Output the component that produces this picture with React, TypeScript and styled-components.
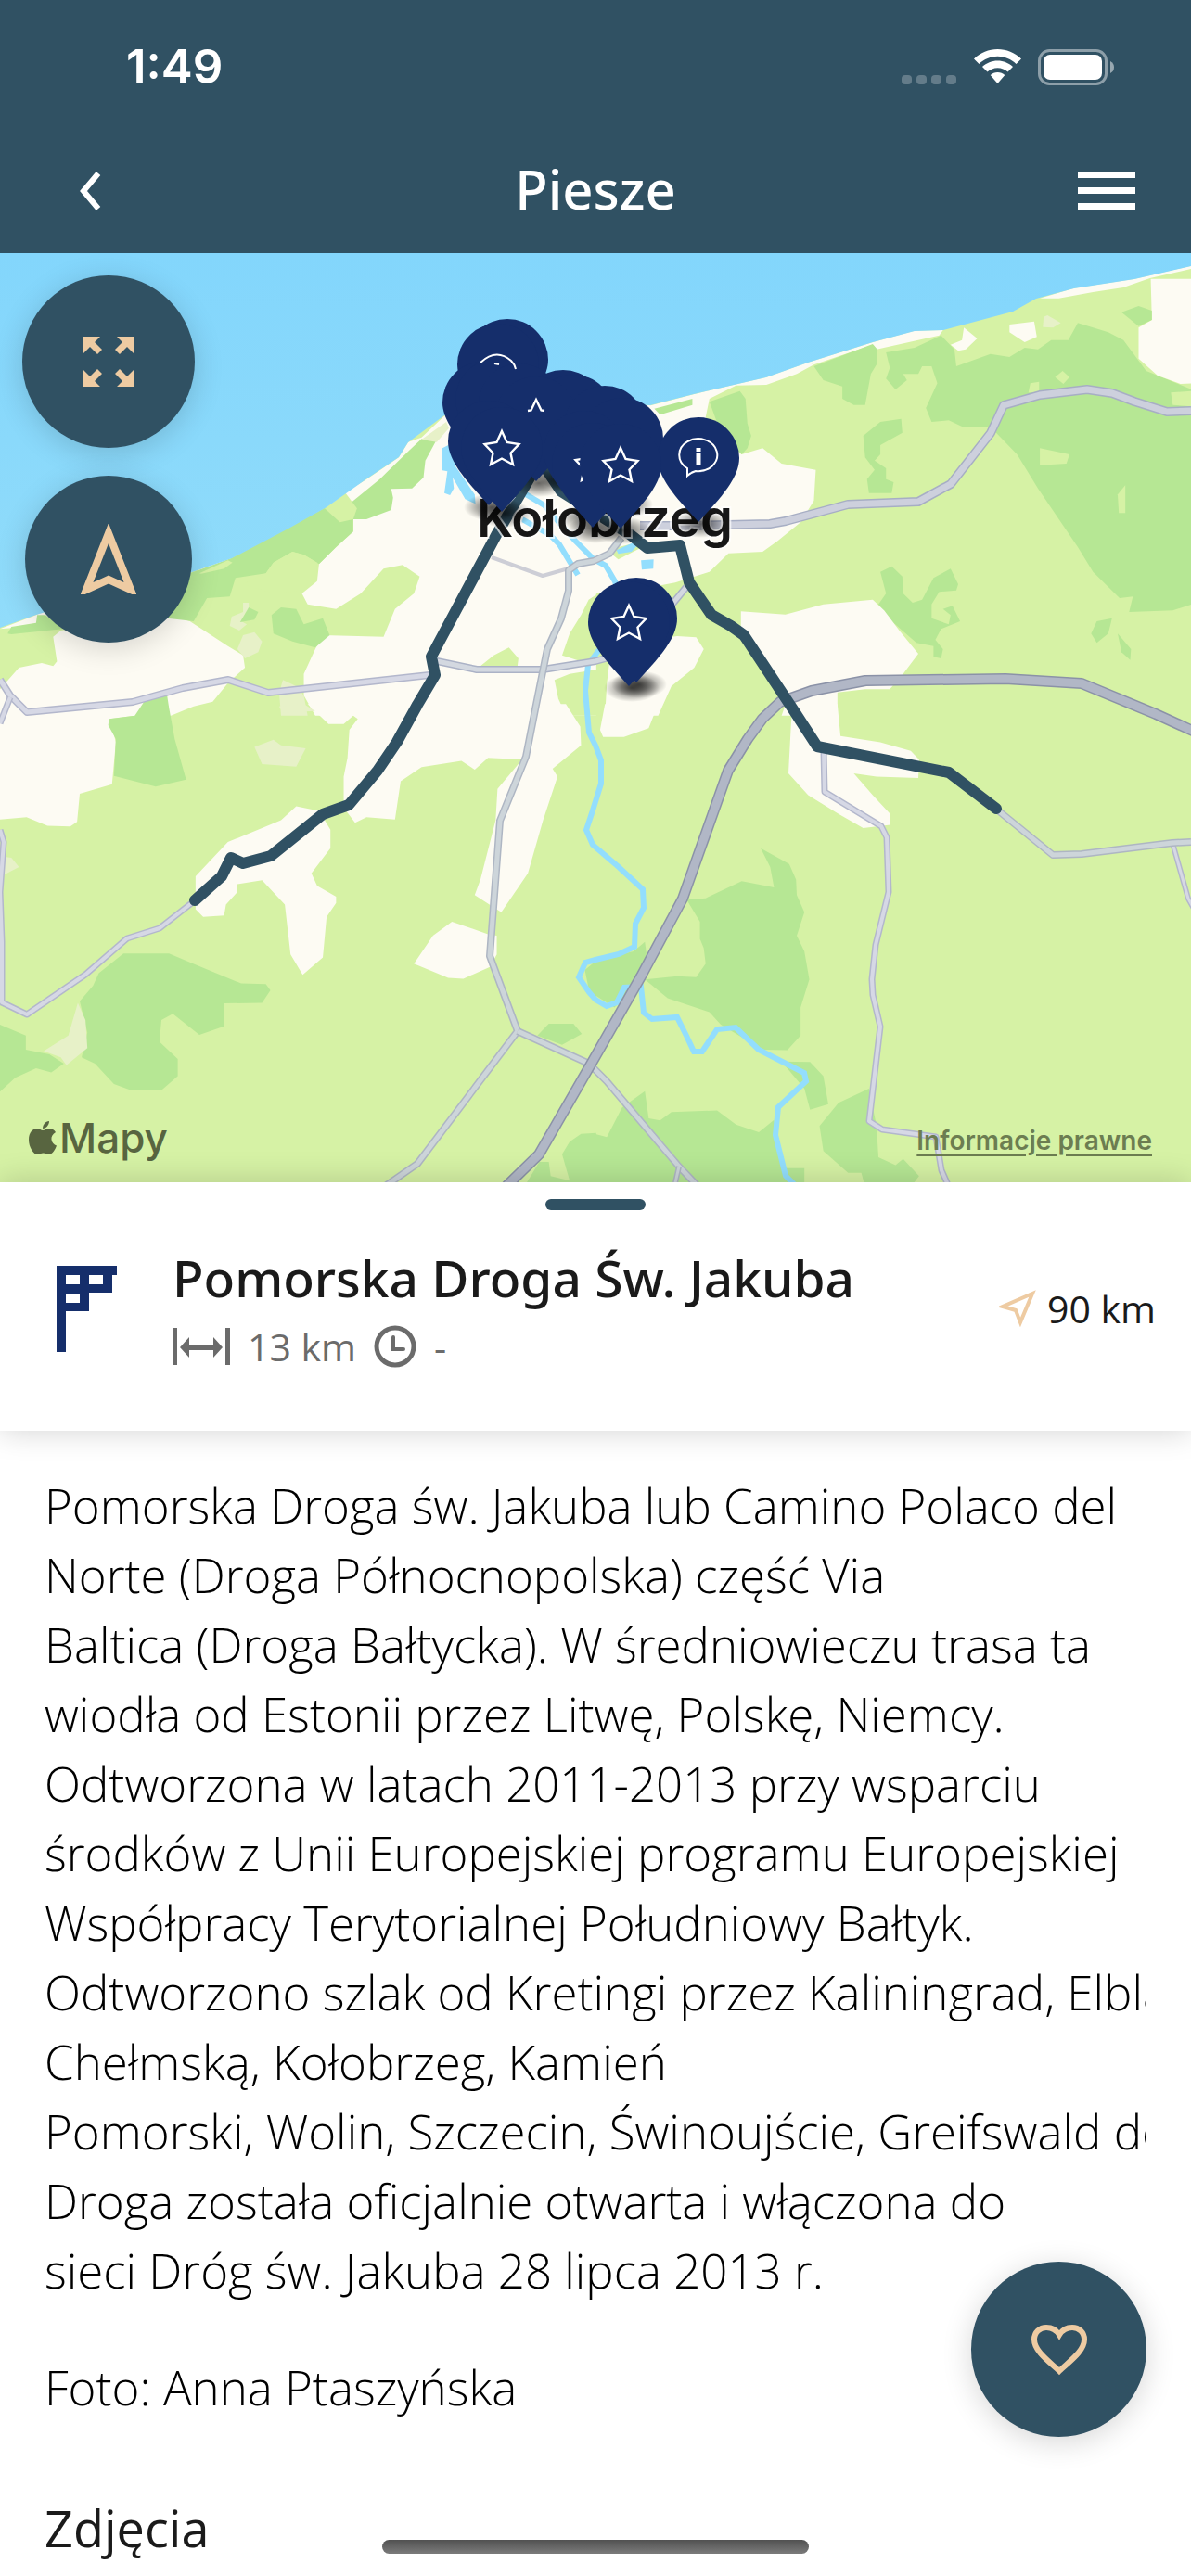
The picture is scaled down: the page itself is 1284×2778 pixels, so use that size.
import React from "react";
import styled, { createGlobalStyle } from "styled-components";

const TEAL = "#305163";
const SAND = "#eecba2";
const NAVY = "#152e6b";
const INK = "#1a1a1a";

const GlobalStyle = createGlobalStyle`
  *, *::before, *::after { box-sizing: border-box; }
  body {
    margin: 0;
    background: #fff;
    color: ${INK};
    font-family: "Open Sans", "Noto Sans", sans-serif;
  }
  button { border: 0; padding: 0; background: none; cursor: pointer; }
`;

const Screen = styled.div`
  display: flex;
  flex-direction: column;
  min-height: 100vh;
  overflow: hidden;
`;

const StatusBar = styled.div`
  display: flex;
  align-items: center;
  justify-content: space-between;
  height: 144px;
  padding: 0 82px 0 136px;
  background: ${TEAL};
  color: #fff;
`;

const Clock = styled.time`
  font: 600 51px/60px Inter, sans-serif;
`;

const StatusIcons = styled.div`
  display: flex;
  align-items: center;
  gap: 18px;
`;

const NavBar = styled.header`
  display: grid;
  grid-template-columns: 1fr auto 1fr;
  align-items: center;
  height: 129px;
  padding: 0 60px 6px;
  background: ${TEAL};
  color: #fff;
`;

const NavTitle = styled.h1`
  margin: 0;
  padding-bottom: 4px;
  font-family: "Noto Sans", "Open Sans", sans-serif;
  font-size: 58px;
  line-height: 80px;
  font-weight: 500;
`;

const NavButton = styled.button<{ $side: "start" | "end" }>`
  display: flex;
  justify-self: ${(p) => p.$side};
  padding-left: ${(p) => (p.$side === "start" ? 26 : 0)}px;
  color: #fff;
`;

const MapArea = styled.section`
  position: relative;
  overflow: hidden;
`;

const MapDrawing = styled.svg`
  display: block;
  width: 100%;
  height: auto;
`;

const MapControls = styled.div`
  position: absolute;
  top: 24px;
  left: 24px;
  display: flex;
  flex-direction: column;
  align-items: center;
  gap: 30px;
`;

const RoundButton = styled.button<{ $size: number }>`
  display: flex;
  align-items: center;
  justify-content: center;
  width: ${(p) => p.$size}px;
  height: ${(p) => p.$size}px;
  border-radius: 50%;
  background: ${TEAL};
  color: ${SAND};
  box-shadow: 0 6px 32px rgba(0, 0, 0, 0.16);
`;

const MapFooter = styled.footer`
  position: absolute;
  right: 42px;
  bottom: 20px;
  left: 31px;
  display: flex;
  align-items: center;
  justify-content: space-between;
`;

const MapBrand = styled.span`
  display: flex;
  align-items: center;
  gap: 3px;
  color: #586540;
  font: 500 44px/56px Inter, sans-serif;
`;

const LegalLink = styled.a`
  padding-top: 6px;
  color: #6c7d51;
  font: 600 28px/34px Inter, sans-serif;
  text-decoration-thickness: 3px;
  text-underline-offset: 4px;
`;

const RouteCard = styled.section`
  position: relative;
  display: flex;
  flex-direction: column;
  height: 268px;
  background: #fff;
  box-shadow: 0 0 32px rgba(0, 0, 0, 0.18);
`;

const Handle = styled.button`
  align-self: center;
  width: 108px;
  height: 12px;
  margin-top: 18px;
  border-radius: 6px;
  background: ${TEAL};
`;

const RouteRow = styled.div`
  display: grid;
  grid-template-columns: 66px 1fr auto;
  align-items: center;
  padding: 35px 38px 0 60px;
`;

const RouteInfo = styled.div`
  display: flex;
  flex-direction: column;
  gap: 6px;
  padding-left: 60px;
`;

const RouteName = styled.h2`
  margin: 0;
  font-family: "Noto Sans", "Open Sans", sans-serif;
  font-size: 55px;
  line-height: 76px;
  font-weight: 500;
`;

const Meta = styled.div`
  display: flex;
  align-items: center;
  gap: 19px;
  color: #6b6b6b;
  font-size: 41px;
  line-height: 60px;
`;

const Distance = styled.div`
  display: flex;
  align-items: center;
  gap: 12px;
  font-size: 41px;
  line-height: 60px;
`;

const Article = styled.main`
  padding: 43px 48px 0;
`;

const Paragraph = styled.p`
  margin: 0 0 51px;
  overflow: hidden;
  color: #000;
  font-size: 51px;
  line-height: 75px;
  font-weight: 300;
  white-space: pre;
`;

const SectionTitle = styled.h2`
  margin: 76px 0 0;
  font-size: 54px;
  line-height: 76px;
  font-weight: 400;
`;

const Favourite = styled(RoundButton)`
  position: fixed;
  right: 48px;
  bottom: 150px;
`;

const HomeIndicator = styled.div`
  position: fixed;
  bottom: 24px;
  left: 50%;
  width: 460px;
  height: 15px;
  border-radius: 8px;
  transform: translateX(-50%);
  background: linear-gradient(#515151, #7b7b7b);
`;

const CREAM = "#fdfbf3";
const GRASS = "#d6f2a5";
const WOOD = "#b6e794";
const PALE = "#e7f1c8";
const WATER = "#93defd";

type Area = [fill: string, points: string];

/* Land cover, one sheet for each quarter of the map. */
const sheets: { transform: string; areas: Area[] }[] = [
  {
    transform: "translate(0 270) scale(.40944 .33333)",
    areas: [
      [CREAM, "870,812 960,745 1050,670 1075,620 1110,605 1175,530 1300,470 1570,480 1570,1505 830,1505 800,1440 800,1370 830,1290 850,1245 1010,1250 1040,1160 1090,1110 1105,1055 1060,1018 1010,1030 950,1110 885,1160 810,1145 795,1110 835,1070 840,1015 885,960 930,910 930,870 900,850"],
      [CREAM, "140,1250 160,1230 460,1185 500,1200 600,1280 640,1310 645,1350 600,1400 560,1460 510,1475 450,1505 0,1505 0,1420 50,1350 110,1335 140,1345 150,1330"],
      [CREAM, "0,1225 95,1180 120,1165 135,1200 30,1222"],
      [CREAM, "520,1035 585,1000 615,995 600,1010 525,1045"],
      [WOOD, "20,1240 30,1218 95,1205 98,1180 120,1180 165,1225 30,1242"],
      [WOOD, "440,1190 500,1045 610,995 860,830 910,830 1000,740 1075,650 1110,610 1150,612 1120,680 1115,735 1085,770 1030,772 1035,800 1030,840 965,870 930,870 930,910 885,960 840,1015 800,985 770,975 720,1010 700,1045 620,1060 605,1120 545,1125 510,1200"],
      [GRASS, "700,1045 720,1010 770,975 800,985 835,1010 835,1060 795,1100 720,1110 640,1080"],
      [PALE, "1175,555 1110,612 1150,620 1182,575"],
      [GRASS, "855,835 910,785 940,835 930,870 895,880"],
      [GRASS, "525,1045 600,1003 612,1010 590,1030 530,1046"],
      [WOOD, "715,1180 740,1155 780,1160 800,1210 850,1190 868,1245 830,1285 770,1265 720,1240"],
      [PALE, "605,1215 610,1185 640,1170 640,1140 655,1140 655,1160 635,1200 650,1210 630,1230"],
      [WOOD, "632,1203 655,1155 680,1170 670,1195"],
      [PALE, "625,1290 640,1245 670,1235 690,1265 680,1300 645,1320"],
      [PALE, "735,1430 745,1390 780,1410 800,1440 810,1505 740,1505"],
      [GRASS, "1265,1345 1300,1310 1340,1285 1365,1320 1362,1350 1365,1367 1255,1367"],
      [GRASS, "1600,1090 1550,1130 1530,1180 1500,1240 1480,1310 1530,1330 1600,1330"],
      [GRASS, "1460,1390 1500,1370 1600,1350 1600,1505 1490,1505 1470,1450"],
      [WATER, "1165,640 1180,630 1200,700 1250,790 1252,820 1225,805 1192,735 1195,770 1185,792 1170,785 1178,715 1165,712"],
    ],
  },
  {
    transform: "translate(642 270) scale(.40944 .33333)",
    areas: [
      [CREAM, "-2,480 145,502 260,465 450,410 560,362 575,370 530,400 450,435 370,437 300,480 290,540 340,620 385,660 440,640 490,690 580,710 575,810 540,880 480,940 440,975 350,980 300,1040 210,1075 100,1100 -2,1110"],
      [WOOD, "155,512 255,480 255,500 170,532"],
      [WOOD, "300,490 380,455 395,480 400,560 410,600 400,640 385,660 330,590"],
      [CREAM, "560,362 730,297 840,260 915,258 905,275 740,320 730,305 575,370"],
      [CREAM, "1170,155 1260,122 1420,92 1568,50 1568,60 1460,90 1390,120 1310,135 1220,155"],
      [WOOD, "575,375 730,303 742,320 742,365 725,400 710,500 680,500 650,480 650,440 600,420"],
      [WOOD, "765,330 840,315 910,275 945,320 950,375 1040,335 1090,345 1130,315 1165,320 1200,290 1245,290 1270,235 1350,265 1390,290 1450,390 1540,435 1570,450 1570,1145 1520,1165 1405,1170 1415,1120 1380,1125 1310,1040 1270,960 1165,770 1110,660 1055,590 1030,570 965,570 930,550 885,555 870,510 900,430 885,375 860,375 850,400 810,400 820,420 790,450 765,415 775,380"],
      [CREAM, "1462,92 1570,92 1570,430 1540,432 1480,405 1430,350 1430,250 1465,225"],
      [WOOD, "1385,200 1430,180 1465,195 1465,225 1430,245"],
      [CREAM, "1090,240 1155,230 1162,280 1130,297 1090,265"],
      [PALE, "1180,215 1190,210 1225,235 1205,250 1178,248"],
      [CREAM, "970,250 1005,285 975,320 955,325 935,305 965,290"],
      [GRASS, "1145,430 1168,425 1168,460 1140,460"],
      [GRASS, "1210,410 1230,390 1248,410 1232,432"],
      [GRASS, "1170,640 1248,660 1240,690 1170,695"],
      [GRASS, "1375,790 1395,760 1395,850 1378,850"],
      [GRASS, "1515,460 1570,455 1570,505 1520,500"],
      [WOOD, "705,600 750,555 805,545 808,590 750,630 750,660 735,680 765,705 765,740 785,750 780,785 720,785 715,740 735,710 710,670"],
      [WOOD, "750,1040 780,1022 808,1055 810,1110 835,1140 860,1130 890,1060 935,1030 955,1080 950,1100 905,1105 885,1145 885,1190 930,1210 935,1180 915,1160 940,1150 960,1200 910,1225 895,1260 915,1290 910,1320 890,1315 890,1280 845,1270 780,1200 745,1145 765,1110"],
      [WOOD, "1305,1240 1320,1200 1360,1190 1350,1240 1320,1270"],
      [WOOD, "1375,1240 1410,1290 1408,1325 1385,1300"],
      [CREAM, "383,1168 500,1178 600,1145 730,1130 760,1165 800,1230 850,1305 810,1370 775,1420 710,1420 637,1430 637,1505 490,1505 500,1470 440,1340 383,1230"],
      [CREAM, "40,1300 100,1270 215,1248 265,1252 285,1290 260,1350 200,1410 165,1505 25,1505 30,1400"],
      [GRASS, "45,985 60,960 110,945 115,965 60,1000"],
      [WATER, "55,970 100,945 110,955 95,975 60,982"],
      [WATER, "120,1003 153,1000 152,1030 122,1033"],
    ],
  },
  {
    transform: "translate(0 760) scale(.40944 .33657)",
    areas: [
      [CREAM, "0,-2 450,-2 430,5 355,35 290,45 305,120 295,255 210,285 203,375 185,390 125,388 70,360 0,368"],
      [WOOD, "287,45 355,35 385,-20 440,-30 445,10 460,110 490,240 410,262 300,228 305,110 285,65"],
      [CREAM, "810,-2 865,62 905,62 930,35 942,45 920,80 915,170 905,230 905,330 935,378 965,360 1040,368 1055,245 1110,200 1215,180 1250,208 1285,170 1375,175 1310,270 1305,370 1265,560 1250,610 1320,665 1390,540 1430,370 1468,230 1455,205 1530,130 1528,70 1490,-2"],
      [CREAM, "780,325 840,340 870,400 870,460 820,540 835,580 885,615 885,635 860,680 850,810 797,865 765,800 750,640 690,562 625,575 625,600 595,640 590,675 535,680 515,655 515,550 600,440 740,370"],
      [CREAM, "1090,830 1140,740 1190,695 1285,735 1308,740 1308,800 1290,840 1220,878 1180,875"],
      [PALE, "670,135 720,112 740,130 805,140 780,198 690,190"],
      [PALE, "735,5 800,-2 830,20 745,25"],
      [PALE, "0,485 30,490 50,520 10,545 0,545"],
      [WOOD, "210,950 245,900 260,860 325,797 445,797 500,825 635,893 700,895 712,915 690,955 590,957 590,1030 525,1058 455,990 425,1010 420,1080 468,1135 468,1190 425,1235 345,1235 300,1215 250,1150 215,1130 230,1050"],
      [WOOD, "0,1025 68,1060 68,1105 130,1120 168,1150 135,1178 95,1165 40,1195 0,1240"],
      [PALE, "205,955 225,1010 230,1100 175,1155 160,1130 115,1110 180,1060"],
      [WOOD, "1415,1060 1445,1022 1510,1022 1532,1055 1480,1090"],
      [WOOD, "1380,1545 1420,1465 1445,1465 1450,1510 1500,1525 1480,1440 1500,1400 1530,1375 1570,1372 1570,1545"],
      [WOOD, "1540,850 1570,820 1570,950 1550,910"],
    ],
  },
  {
    transform: "translate(642 760) scale(.40944 .33657)",
    areas: [
      [CREAM, "25,-2 165,-2 140,75 75,103 20,103 12,80"],
      [CREAM, "520,-2 637,-2 645,100 750,120 830,148 852,175 850,235 740,230 680,220 730,290 776,350 776,385 705,395 640,350 560,290 508,220 515,60"],
      [WOOD, "240,625 290,620 385,565 470,585 460,520 435,460 510,510 528,560 530,610 550,665 530,740 550,790 563,880 540,970 540,1060 505,1107 440,1105 330,1025 300,985 190,940 130,880 215,870 265,873 290,830 285,780 275,750 275,695"],
      [WOOD, "-2,820 100,790 130,760 140,850 90,920 50,970 -2,930"],
      [WOOD, "490,1143 565,1145 600,1190 613,1280 565,1298 550,1230"],
      [WOOD, "590,1350 640,1275 720,1230 740,1350 745,1450 790,1475 810,1455 852,1510 830,1545 710,1545 700,1500 665,1500 600,1430"],
      [WOOD, "-2,1375 30,1385 70,1290 130,1238 140,1325 170,1332 200,1305 320,1300 370,1345 430,1370 470,1330 490,1485 550,1485 550,1545 -2,1545"],
    ],
  },
];

const streams = [
  "548,500 567,533 587,545 604,565 620,583 640,603 653,610 663,627 680,680 645,702 634,717 631,745 635,790 642,804 648,820 648,845 639,874 632,895 639,911 667,935 693,959 694,979 685,996 684,1021 667,1029 642,1035 631,1038 624,1054 635,1070 642,1078 654,1085 665,1081 673,1065 691,1064 694,1092 703,1099 730,1097 740,1117 748,1134 757,1134 773,1110 793,1108 818,1132 867,1157 869,1166 839,1194 836,1224 847,1268 859,1280",
  "563,560 593,577 603,587 615,607 623,620",
];

const roads: { points: string; width: number; core: string; edge: string }[] = [
  { points: "530,601 585,621 613,613", width: 4, core: "#cdced6", edge: "#cdced6" },
  { points: "0,733 11,750 29,768 143,757 197,742 246,733 289,747 463,728", width: 8, core: "#d6d8e5", edge: "#b3b7cc" },
  { points: "11,752 0,780", width: 7, core: "#d6d8e5", edge: "#b3b7cc" },
  { points: "471,713 514,722 585,722 642,713 690,700 726,650 740,633", width: 8, core: "#d3d8e0", edge: "#abb2c6" },
  { points: "670,580 657,597 640,605 623,608 613,615 613,637 605,667 590,700 586,720 578,760 567,816 539,885 528,1031 558,1112 450,1255 414,1280", width: 8, core: "#cdd5da", edge: "#aeb6c3" },
  { points: "558,1112 635,1147 654,1166 732,1258 753,1280", width: 8, core: "#cdd5da", edge: "#aeb6c3" },
  { points: "732,1258 727,1280", width: 6, core: "#cdd5da", edge: "#aeb6c3" },
  { points: "0,895 4,908 0,962 2,1016 2,1081 29,1094 92,1051 137,1012 172,1001 209,972", width: 7, core: "#d6d8e5", edge: "#b3b7cc" },
  { points: "690,567 736,567 830,565 847,562 914,544 990,541 1025,522 1068,467 1082,437 1121,426 1172,420 1199,424 1223,433 1258,444 1284,443", width: 10, core: "#cdd0dd", edge: "#a7aec4" },
  { points: "888,810 889,854 950,891 956,903 958,962 944,1019 940,1056 941,1073 949,1107 937,1209 951,1218 1009,1226 1015,1262 1023,1280", width: 7, core: "#d6d8e5", edge: "#b3b7cc" },
  { points: "1264,909 1281,969 1290,985", width: 6, core: "#d6d8e5", edge: "#b3b7cc" },
  { points: "1076,874 1135,922 1166,921 1264,909 1284,908", width: 8, core: "#cdd5da", edge: "#aeb6c3" },
  { points: "545,1280 581,1245 642,1139 691,1053 736,969 785,831 806,797 822,775 841,757 875,745 933,734 1084,732 1166,737 1246,770 1290,790", width: 12, core: "#b1b7c6", edge: "#8b92a7" },
];

const trail = [
  "585,492 573,512 535,577 465,708 469,728 450,760 428,800 407,831 376,868 348,878 292,923 262,931 249,925 239,945 210,971",
  "585,500 605,530 680,577 698,591 733,588 743,628 767,663 788,675 802,685 855,765 881,805 1023,833 1074,872",
];

type PinData = { x: number; y: number; icon?: "star" | "peak" | "info" };

const pins: PinData[] = [
  { x: 547, y: 457 },
  { x: 537, y: 462 },
  { x: 521, y: 503 },
  { x: 535, y: 500 },
  { x: 560, y: 505 },
  { x: 607, y: 512 },
  { x: 618, y: 517 },
  { x: 578, y: 519, icon: "peak" },
  { x: 652, y: 529 },
  { x: 671, y: 542 },
  { x: 527, y: 545 },
  { x: 541, y: 552, icon: "star" },
  { x: 630, y: 556 },
  { x: 639, y: 569, icon: "star" },
  { x: 753, y: 563, icon: "info" },
  { x: 669, y: 570, icon: "star" },
  { x: 686, y: 736 },
  { x: 678, y: 740, icon: "star" },
];

function Pin({ x, y, icon }: PinData) {
  return (
    <g transform={`translate(${x} ${y})`}>
      <path
        d="M0 0 L-18 -20 C-31 -35 -44 -52 -44 -69 A44 44 0 0 1 44 -69 C44 -52 31 -35 18 -20 Z"
        fill={NAVY}
      />
      {icon === "star" && (
        <path
          d="M0 -87 L5.500 -75 L18.500 -73 L9.500 -63.500 L12 -51 L0 -57.500 L-12 -51 L-9.500 -63.500 L-18.500 -73 L-5.500 -75 Z"
          fill="none"
          stroke="#fff"
          strokeWidth="2.400"
        />
      )}
      {icon === "peak" && (
        <path
          d="M-9 -76 L-5.500 -76.500 L0 -88 L5.500 -76.500 L9 -76"
          fill="none"
          stroke="#fff"
          strokeWidth="2.400"
        />
      )}
      {icon === "info" && (
        <g fill="none" stroke="#fff" strokeWidth="2">
          <path d="M-12 -50 V-58 A20.500 17.500 0 1 1 -3 -55 Q-9 -53 -12 -50 Z" />
          <path d="M0 -80 V-76 M0 -74 V-62" strokeWidth="5" />
        </g>
      )}
    </g>
  );
}

function RouteMap() {
  return (
    <MapDrawing viewBox="0 273 1284 1002" role="img" aria-label="Mapa trasy">
      <defs>
        <linearGradient id="sea" x1="0" y1="0" x2="0" y2="1">
          <stop offset="0" stopColor="#83d6fc" />
          <stop offset="1" stopColor="#91dcfa" />
        </linearGradient>
        <radialGradient id="shade">
          <stop offset="0" stopOpacity="0.600" />
          <stop offset="0.400" stopOpacity="0.400" />
          <stop offset="1" stopOpacity="0" />
        </radialGradient>
      </defs>
      <rect y="273" width="1284" height="1002" fill={GRASS} />
      {sheets.map((sheet) => (
        <g key={sheet.transform} transform={sheet.transform}>
          {sheet.areas.map(([fill, points]) => (
            <polygon key={points} points={points} fill={fill} />
          ))}
        </g>
      ))}
      <polygon
        fill="url(#sea)"
        points="0,273 0,677 39,663 100,645 207,617 250,602 311,570 352,547 393,518 430,493 440,477 479,448 560,430 701,437 748,425 826,407 871,391 941,369 986,357 1017,356 1092,336 1117,322 1158,311 1223,301 1284,287 1284,273"
      />
      {streams.map((points) => (
        <polyline key={points} points={points} fill="none" stroke={WATER} strokeWidth="6" />
      ))}
      <g fill="none" strokeLinejoin="round">
        {roads.map((r) => (
          <g key={r.points}>
            <polyline points={r.points} stroke={r.edge} strokeWidth={r.width} />
            <polyline points={r.points} stroke={r.core} strokeWidth={r.width - 3} />
          </g>
        ))}
        {trail.map((points) => (
          <polyline
            key={points}
            points={points}
            stroke={TEAL}
            strokeWidth="12"
            strokeLinecap="round"
          />
        ))}
      </g>
      <text
        x="514"
        y="579"
        fontFamily="Inter, sans-serif"
        fontSize="56"
        fontWeight="600"
        fill="#171717"
        stroke="#ffffffb0"
        strokeWidth="4"
        paintOrder="stroke"
      >
        Kołobrzeg
      </text>
      {pins.map((p) => (
        <ellipse key={`${p.x}-${p.y}`} cx={p.x + 3} cy={p.y + 2} rx="30" ry="15" fill="url(#shade)" />
      ))}
      {pins.map((p) => (
        <Pin key={`${p.x}-${p.y}`} {...p} />
      ))}
      <path d="M518 391 Q535 375 551 389 Q555 393 556 398 M533 392 L538 393" fill="none" stroke="#fff" strokeWidth="2" />
    </MapDrawing>
  );
}

const description = [
  "Pomorska Droga św. Jakuba lub Camino Polaco del",
  "Norte (Droga Północnopolska) część Via",
  "Baltica (Droga Bałtycka). W średniowieczu trasa ta",
  "wiodła od Estonii przez Litwę, Polskę, Niemcy.",
  "Odtworzona w latach 2011-2013 przy wsparciu",
  "środków z Unii Europejskiej programu Europejskiej",
  "Współpracy Terytorialnej Południowy Bałtyk.",
  "Odtworzono szlak od Kretingi przez Kaliningrad, Elbląg",
  "Chełmską, Kołobrzeg, Kamień",
  "Pomorski, Wolin, Szczecin, Świnoujście, Greifswald do",
  "Droga została oficjalnie otwarta i włączona do",
  "sieci Dróg św. Jakuba 28 lipca 2013 r.",
].join("\n");

export default function App() {
  return (
    <Screen>
      <GlobalStyle />
      <StatusBar>
        <Clock>1:49</Clock>
        <StatusIcons>
          <svg width="60" height="39" viewBox="0 0 60 39" fill="#fff" fillOpacity="0.250">
            <rect x="0" y="28" width="11" height="10" rx="4" />
            <rect x="16" y="28" width="11" height="10" rx="4" />
            <rect x="32" y="28" width="11" height="10" rx="4" />
            <rect x="48" y="28" width="11" height="10" rx="4" />
          </svg>
          <svg width="51" height="38" viewBox="0 0 51 38" fill="#fff">
            <path d="M25.500 0 C35 0 44 3.800 51 10.500 L45.500 16 C40 10.800 33 7.800 25.500 7.800 C18 7.800 11 10.800 5.500 16 L0 10.500 C7 3.800 16 0 25.500 0Z" />
            <path d="M25.500 12.500 C31.800 12.500 37.500 15 42 19 L36.500 24.500 C33.500 21.800 29.700 20.200 25.500 20.200 C21.300 20.200 17.500 21.800 14.500 24.500 L9 19 C13.500 15 19.200 12.500 25.500 12.500Z" />
            <path d="M25.500 25 C28.500 25 31.200 26.200 33.300 28 L25.500 37 L17.700 28 C19.800 26.200 22.500 25 25.500 25Z" />
          </svg>
          <svg width="83" height="39" viewBox="0 0 83 39">
            <rect x="1.500" y="1.500" width="72" height="36" rx="11" fill="none" stroke="#fff" strokeOpacity="0.450" strokeWidth="3" />
            <rect x="6" y="6" width="63" height="27" rx="7" fill="#fff" />
            <path d="M78 13 Q82 15 82 19.500 Q82 24 78 26Z" fill="#fff" fillOpacity="0.500" />
          </svg>
        </StatusIcons>
      </StatusBar>

      <NavBar>
        <NavButton $side="start" aria-label="Wstecz">
          <svg width="24" height="42" viewBox="0 0 24 42" fill="none" stroke="currentColor" strokeWidth="6">
            <path d="M20 2 L4 21 L20 40" />
          </svg>
        </NavButton>
        <NavTitle>Piesze</NavTitle>
        <NavButton $side="end" aria-label="Menu">
          <svg width="62" height="42" viewBox="0 0 62 42" fill="currentColor">
            <path d="M0 0h62v7H0zM0 17h62v7H0zM0 34h62v7H0z" />
          </svg>
        </NavButton>
      </NavBar>

      <MapArea>
        <RouteMap />
        <MapControls>
          <RoundButton $size={186} aria-label="Pełny ekran">
            <svg width="56" height="56" viewBox="0 0 56 56" fill="currentColor">
              <path d="M1 1h18l-6 6 8 8-5 5-8-8-7 7zM55 1v18l-7-7-8 8-5-5 8-8-6-6zM1 55V37l7 7 8-8 5 5-8 8 6 6zM55 55H37l6-6-8-8 5-5 8 8 7-7z" />
            </svg>
          </RoundButton>
          <RoundButton $size={180} aria-label="Moja lokalizacja">
            <svg width="60" height="76" viewBox="0 0 60 76" fill="none" stroke="currentColor" strokeWidth="8">
              <path d="M30 10 L54 71 L30 60 L6 71 Z" />
            </svg>
          </RoundButton>
        </MapControls>
        <MapFooter>
          <MapBrand>
            <svg width="30" height="38" viewBox="0 0 30 38" fill="currentColor">
              <path d="M22 1 C22 5 19 9 15 9 C15 5 18 1 22 1Z" />
              <path d="M15 11 C17 11 19 9 22 9 C25 9 27.500 10.500 29 13 C25.500 15 24 18 24.500 21 C25 24 27 26.500 30 27.500 C28.500 31.500 25.500 37 22 37 C19.500 37 18.500 35.500 15.700 35.500 C13 35.500 12 37 9.500 37 C5 37 0 29 0 21 C0 13 4.500 9 9 9 C11.500 9 13.500 11 15 11Z" />
            </svg>
            Mapy
          </MapBrand>
          <LegalLink href="#legal">Informacje prawne</LegalLink>
        </MapFooter>
      </MapArea>

      <RouteCard>
        <Handle aria-label="Zwiń panel" />
        <RouteRow>
          <svg width="66" height="94" viewBox="0 0 66 94" fill={NAVY}>
            <path
              fillRule="evenodd"
              d="M1 1h65v10h-5v19H36v20H11v44H1zM11 11v10h15V11zM36 11v10h15V11zM11 31v10h15V31z"
            />
          </svg>
          <RouteInfo>
            <RouteName>Pomorska Droga Św. Jakuba</RouteName>
            <Meta>
              <svg width="62" height="40" viewBox="0 0 62 40" fill="currentColor">
                <path d="M0 0h5v40H0zM57 0h5v40h-5zM8 21l10-11v8h26v-8l10 11-10 11v-8H18v8z" />
              </svg>
              13 km
              <svg width="46" height="46" viewBox="0 0 46 46" fill="none" stroke="currentColor" strokeWidth="5">
                <circle cx="23" cy="23" r="20" />
                <path d="M21 13v13h11" strokeLinecap="round" strokeWidth="4" />
              </svg>
              -
            </Meta>
          </RouteInfo>
          <Distance>
            <svg width="40" height="40" viewBox="0 0 40 40" fill="none" stroke={SAND} strokeWidth="4">
              <path d="M36 4 L4 18 L18 22 L23 35 Z" />
            </svg>
            90 km
          </Distance>
        </RouteRow>
      </RouteCard>

      <Article>
        <Paragraph>{description}</Paragraph>
        <Paragraph>Foto: Anna Ptaszyńska</Paragraph>
        <SectionTitle>Zdjęcia</SectionTitle>
      </Article>

      <Favourite $size={189} aria-label="Dodaj do ulubionych">
        <svg width="62" height="56" viewBox="0 0 62 56" fill="none" stroke="currentColor" strokeWidth="6">
          <path d="M31 51 C22 42 4 30 4 17 C4 9 10 4 17 4 C23 4 28 7 31 12 C34 7 39 4 45 4 C52 4 58 9 58 17 C58 30 40 42 31 51Z" />
        </svg>
      </Favourite>
      <HomeIndicator />
    </Screen>
  );
}
